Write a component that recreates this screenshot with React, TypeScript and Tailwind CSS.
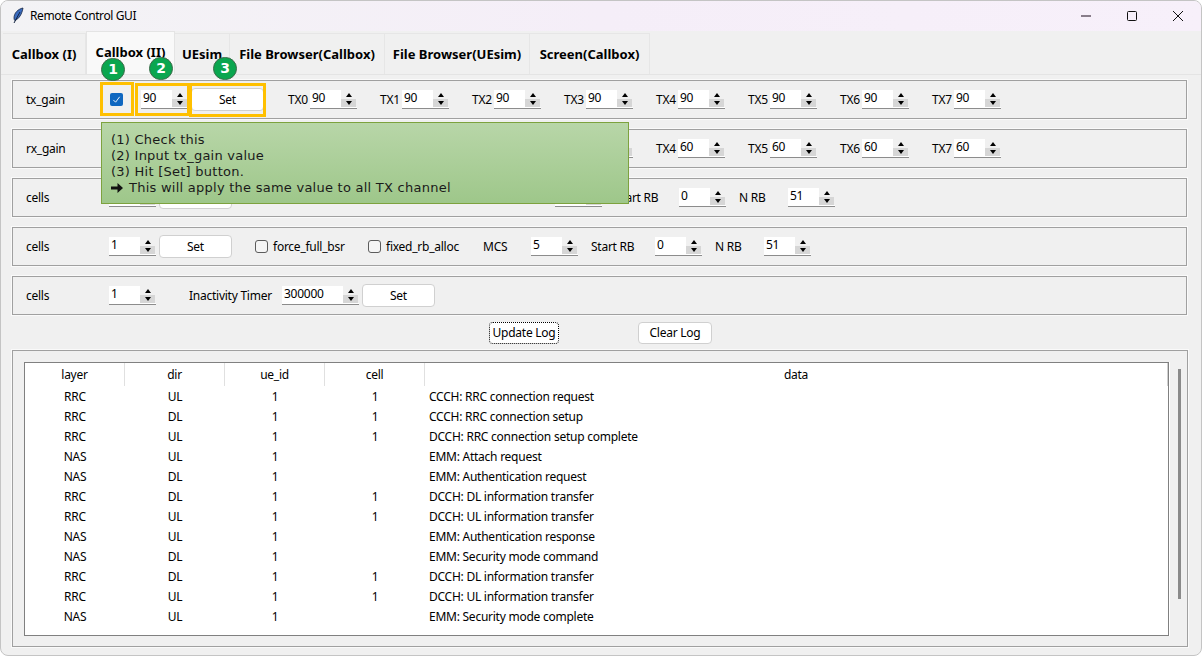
const tabs = [
  { label: 'Callbox (I)', w: 'w-[83px]' },
  { label: 'Callbox (II)', w: 'w-[89px]', active: true },
  { label: 'UEsim', w: 'w-[55px]' },
  { label: 'File Browser(Callbox)', w: 'w-[155px]' },
  { label: 'File Browser(UEsim)', w: 'w-[145px]' },
  { label: 'Screen(Callbox)', w: 'w-[120px]' },
]

const logs = [
  ['RRC', 'UL', '1', '1', 'CCCH: RRC connection request'],
  ['RRC', 'DL', '1', '1', 'CCCH: RRC connection setup'],
  ['RRC', 'UL', '1', '1', 'DCCH: RRC connection setup complete'],
  ['NAS', 'UL', '1', '', 'EMM: Attach request'],
  ['NAS', 'DL', '1', '', 'EMM: Authentication request'],
  ['RRC', 'DL', '1', '1', 'DCCH: DL information transfer'],
  ['RRC', 'UL', '1', '1', 'DCCH: UL information transfer'],
  ['NAS', 'UL', '1', '', 'EMM: Authentication response'],
  ['NAS', 'DL', '1', '', 'EMM: Security mode command'],
  ['RRC', 'DL', '1', '1', 'DCCH: DL information transfer'],
  ['RRC', 'UL', '1', '1', 'DCCH: UL information transfer'],
  ['NAS', 'UL', '1', '', 'EMM: Security mode complete'],
]

const channels = ['TX0', 'TX1', 'TX2', 'TX3', 'TX4', 'TX5', 'TX6', 'TX7']

function Spin({ value, className = 'w-[47px]' }: { value: string; className?: string }) {
  return (
    <div className={`flex h-[19px] shrink-0 items-start border-b border-[#8c8c8c] bg-white ${className}`}>
      <span className="flex-1 pl-[2px] text-left leading-[16px]">{value}</span>
      <div className="flex h-[17px] w-[16px] flex-col justify-between bg-[#f0f0f0] pr-px pt-px">
        <div className="flex h-[7px] items-center justify-center bg-[#f0f0f0]">
          <div className="h-0 w-0 border-x-[3.5px] border-b-[4px] border-x-transparent border-b-black" />
        </div>
        <div className="flex h-[8px] items-center justify-center bg-[#d6d6d6]">
          <div className="h-0 w-0 border-x-[3.5px] border-t-[4px] border-x-transparent border-t-black" />
        </div>
      </div>
    </div>
  )
}

function SetButton({ className = '' }: { className?: string }) {
  return (
    <button className={`h-[23px] w-[73px] shrink-0 rounded-[4px] border border-[#d0d0d0] bg-white text-center ${className}`}>
      Set
    </button>
  )
}

function Check({ className = '' }: { className?: string }) {
  return <div className={`h-[13px] w-[13px] shrink-0 rounded-[3px] border border-[#5c5c5c] bg-[#f5f5f5] ${className}`} />
}

function Row({ label, children }: { label: string; children: React.ReactNode }) {
  return (
    <div className="flex h-[39px] items-center border border-[#a0a0a0] pl-[13px] shadow-[0_0_0_1px_#fafafa]">
      <span className="w-[83px] shrink-0">{label}</span>
      {children}
    </div>
  )
}

function GainRow({ label, value }: { label: string; value: string }) {
  return (
    <Row label={label}>
      <div className="ml-px flex h-[13px] w-[13px] shrink-0 items-center justify-center rounded-[2px] bg-[#0f67c0]">
        <svg viewBox="0 0 10 10" className="h-[9px] w-[9px]" fill="none" stroke="#fff" strokeWidth="1">
          <path d="M1.5 5.5 4 8l4.5-6" />
        </svg>
      </div>
      <Spin value={value} className="ml-[18px] w-[47px]" />
      <SetButton className="ml-[3px]" />
      <div className="ml-[24px] flex">
        {channels.map((ch) => (
          <div key={ch} className="flex w-[92px] shrink-0 items-center">
            <span className="w-[22px] shrink-0">{ch}</span>
            <Spin value={value} />
          </div>
        ))}
      </div>
    </Row>
  )
}

function Badge({ n, className }: { n: number; className: string }) {
  return (
    <div className={`absolute flex h-[23px] w-[24px] items-center justify-center rounded-full border border-[#3d6b4a] bg-[#0aa64f] text-[14px] font-bold text-white ${className}`} style={{ fontFamily: '"DejaVu Sans", sans-serif', letterSpacing: '0' }}>
      {n}
    </div>
  )
}

export default function App() {
  return (
    <div className="relative h-[656px] w-[1202px] overflow-hidden rounded-[8px] border border-[#c4c4c4] bg-[#f0f0f0] text-[12px] text-black" style={{ fontFamily: '"Noto Sans", sans-serif', letterSpacing: '-0.25px' }}>
      {/* Title bar */}
      <div className="flex h-[30px] items-center bg-gradient-to-r from-[#f3f3f5] via-[#f5eef8] to-[#f7f0fa] pl-[10px]">
        <svg viewBox="0 0 14 18" className="h-[18px] w-[14px]">
          <path d="M12 1C7 2 3 6 3 11c0 1 .3 2 .8 2.5C8 12 11 7 12 1Z" fill="#3a6cc0" stroke="#14233f" strokeWidth=".8" />
          <path d="M9 5 3 16" stroke="#14233f" strokeWidth="1" fill="none" />
        </svg>
        <span className="ml-[5px]" style={{ letterSpacing: '-0.4px' }}>Remote Control GUI</span>
        <div className="ml-auto flex h-full items-center">
          <svg viewBox="0 0 12 12" className="mr-[34px] h-[12px] w-[12px]" fill="none" stroke="#1a0a1a" strokeWidth="1">
            <path d="M1 6h10" />
          </svg>
          <svg viewBox="0 0 12 12" className="mr-[34px] h-[12px] w-[12px]" fill="none" stroke="#111" strokeWidth="1">
            <rect x="1.5" y="1.5" width="9" height="9" rx="1" />
          </svg>
          <svg viewBox="0 0 12 12" className="mr-[17px] h-[12px] w-[12px]" fill="none" stroke="#111" strokeWidth="1">
            <path d="M1 1l10 10M11 1 1 11" />
          </svg>
        </div>
      </div>

      {/* Tabs */}
      <div className="flex h-[44px] items-end border-b border-[#e4e4e4] pl-[2px] text-[13px] font-bold" style={{ letterSpacing: '0' }}>
        {tabs.map((tab) => (
          <div
            key={tab.label}
            className={
              tab.active
                ? `flex h-[43px] items-start justify-center border-x border-t border-[#e4e4e4] bg-[#f9f9f9] pt-[11px] ${tab.w}`
                : `flex h-[41px] items-center justify-center border-r border-t border-[#e6e6e6] bg-[#f0f0f0] pt-[1px] ${tab.w}`
            }
          >
            {tab.label}
          </div>
        ))}
      </div>

      {/* Controls */}
      <div className="flex flex-col gap-[10px] pl-[11px] pr-[14px] pt-[5px]">
        <GainRow label="tx_gain" value="90" />
        <GainRow label="rx_gain" value="60" />
        <Row label="cells">
          <Spin value="1" />
          <SetButton className="ml-[3px]" />
          <Spin value="5" className="ml-[323px] w-[47px]" />
          <span className="ml-[13px] w-[64px] shrink-0">Start RB</span>
          <Spin value="0" />
          <span className="ml-[13px] w-[49px] shrink-0">N RB</span>
          <Spin value="51" />
        </Row>
        <Row label="cells">
          <Spin value="1" />
          <SetButton className="ml-[3px]" />
          <Check className="ml-[23px]" />
          <span className="ml-[5px] w-[95px] shrink-0">force_full_bsr</span>
          <Check />
          <span className="ml-[5px] w-[97px] shrink-0">fixed_rb_alloc</span>
          <span className="w-[48px] shrink-0">MCS</span>
          <Spin value="5" />
          <span className="ml-[13px] w-[64px] shrink-0">Start RB</span>
          <Spin value="0" />
          <span className="ml-[13px] w-[49px] shrink-0">N RB</span>
          <Spin value="51" />
        </Row>
        <Row label="cells">
          <Spin value="1" />
          <span className="ml-[33px] w-[93px] shrink-0">Inactivity Timer</span>
          <Spin value="300000" className="w-[77px]" />
          <SetButton className="ml-[3px]" />
        </Row>
      </div>

      {/* Log buttons */}
      <div className="relative mt-[7px] flex h-[23px] pl-[488px]">
        <button className="h-[22px] w-[70px] rounded-[4px] border border-dotted border-black bg-white text-center">Update Log</button>
        <button className="ml-[79px] h-[22px] w-[74px] rounded-[4px] border border-[#d0d0d0] bg-white text-center">Clear Log</button>
      </div>

      {/* Log table */}
      <div className="ml-[11px] mt-[5px] flex h-[297px] w-[1176px] border border-[#a0a0a0] pl-[11px] pt-[11px] shadow-[0_0_0_1px_#fafafa]">
        <div className="h-[274px] w-[1145px] shrink-0 border border-[#808080] bg-white shadow-[1px_0_0_#fff]">
          <div className="flex h-[24px] items-start">
            <div className="w-[100px] border-r border-[#e0e0e0] text-center leading-[23px]">layer</div>
            <div className="w-[100px] border-r border-[#e0e0e0] text-center leading-[23px]">dir</div>
            <div className="w-[100px] border-r border-[#e0e0e0] text-center leading-[23px]">ue_id</div>
            <div className="w-[100px] border-r border-[#e0e0e0] text-center leading-[23px]">cell</div>
            <div className="flex-1 border-r border-[#d0d0d0] text-center leading-[23px]">data</div>
          </div>
          {logs.map((log, i) => (
            <div key={i} className="flex h-[20px] items-center">
              <div className="w-[100px] text-center">{log[0]}</div>
              <div className="w-[100px] text-center">{log[1]}</div>
              <div className="w-[100px] text-center">{log[2]}</div>
              <div className="w-[100px] text-center">{log[3]}</div>
              <div className="flex-1 pl-[4px]">{log[4]}</div>
            </div>
          ))}
        </div>
        <div className="ml-[9px] mt-[7px] h-[230px] w-[3px] bg-[#8a8a8a]" />
      </div>

      {/* Annotation overlay */}
      <div className="absolute left-[99px] top-[81px] h-[34px] w-[34px] border-[3px] border-[#ffc000]" />
      <div className="absolute left-[134px] top-[82px] h-[33px] w-[55px] border-[3px] border-[#ffc000]" />
      <div className="absolute left-[188px] top-[82px] h-[34px] w-[77px] border-[3px] border-[#ffc000]" />
      <Badge n={1} className="left-[100px] top-[57px]" />
      <Badge n={2} className="left-[148px] top-[56px]" />
      <Badge n={3} className="left-[212px] top-[56px]" />
      <div
        className="absolute left-[100px] top-[121px] h-[82px] w-[528px] border border-[#7da23e] bg-gradient-to-b from-[#b8d6a8] to-[#9ec78a] pl-[9px] pt-[9px] text-[13px] leading-[16px] text-[#1a1a1a]"
        style={{ fontFamily: '"DejaVu Sans", sans-serif', letterSpacing: '0.25px' }}
      >
        <div>(1) Check this</div>
        <div>(2) Input tx_gain value</div>
        <div>(3) Hit [Set] button.</div>
        <div className="flex items-center">
          <svg viewBox="0 0 12 10" className="h-[10px] w-[12px] shrink-0" fill="#111">
            <path d="M0 3.6h6.5V0L12 5 6.5 10V6.4H0Z" />
          </svg>
          <span className="ml-[6px]">This will apply the same value to all TX channel</span>
        </div>
      </div>
    </div>
  )
}
